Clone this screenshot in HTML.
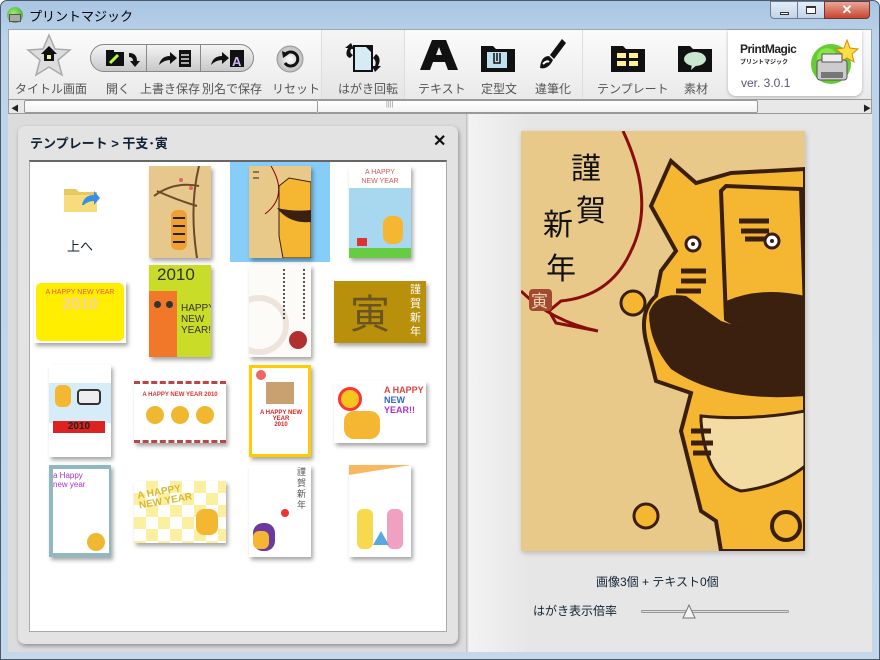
<!DOCTYPE html>
<html><head><meta charset="utf-8"><style>
*{margin:0;padding:0;box-sizing:border-box}
body{width:880px;height:660px;overflow:hidden;background:#fff;font-family:"Liberation Sans","Noto Sans CJK JP",sans-serif;position:relative}
.a{position:absolute}
.t{font-size:12px;color:#555;white-space:nowrap}
.th{position:absolute;box-shadow:2px 3px 4px rgba(0,0,0,.35);overflow:hidden}
</style></head><body>
<div class="a" style="left:0;top:0;width:880px;height:660px;background:linear-gradient(#a9c5e2,#bcd3ea 40px,#c4d8ec);border:1px solid #4a5a6c;border-radius:7px 7px 0 0"></div>
<div class="a" style="left:7px;top:7px;width:16px;height:16px;border-radius:50%;background:radial-gradient(circle at 40% 40%,#9e6,#393);"></div>
<div class="a" style="left:9px;top:14px;width:12px;height:8px;background:#aaa;border:1px solid #555"></div>
<div class="a" style="left:29px;top:6px;font-size:13px;color:#000">プリントマジック</div>
<div class="a" style="left:770px;top:1px;width:28px;height:18px;border:1px solid #6a7d93;border-radius:0 0 0 4px;background:linear-gradient(#e4edf7,#c2d3e6)"><div class="a" style="left:9px;top:10px;width:9px;height:3px;background:#fff;border:1px solid #333"></div></div>
<div class="a" style="left:797px;top:1px;width:28px;height:18px;border:1px solid #6a7d93;background:linear-gradient(#e4edf7,#c2d3e6)"><div class="a" style="left:8px;top:4px;width:10px;height:8px;border:1px solid #333;border-top-width:2px;background:#fff"></div></div>
<div class="a" style="left:824px;top:1px;width:46px;height:18px;border:1px solid #6a3a30;border-radius:0 0 4px 0;background:linear-gradient(#e9a597,#c8452f);color:#fff;font-weight:bold;font-size:13px;text-align:center;line-height:16px">✕</div>
<div class="a" style="left:8px;top:29px;width:864px;height:70px;background:linear-gradient(#fbfbfb,#f1f1f1 60%,#e9e9e9);border:1px solid #9aa;border-bottom:none"></div>
<div class="a" style="left:322px;top:30px;width:83px;height:69px;background:linear-gradient(#f5f5f5,#e5e5e5)"></div>
<div class="a" style="left:321px;top:30px;width:1px;height:69px;background:#ddd"></div>
<div class="a" style="left:404px;top:30px;width:1px;height:69px;background:#ddd"></div>
<div class="a" style="left:582px;top:30px;width:1px;height:69px;background:#ddd"></div>
<svg class="a" style="left:26px;top:33px" width="46" height="46" viewBox="0 0 46 46"><polygon points="23,2 29,16 44,17 32,27 36,42 23,34 10,42 14,27 2,17 17,16" fill="#ddd" stroke="#aaa" stroke-width="1.5"/><polygon points="23,13 31,21 28,21 28,28 18,28 18,21 15,21" fill="#111"/><rect x="21" y="22" width="4" height="4" fill="#ee9"/></svg>
<div class="a" style="left:90px;top:44px;width:164px;height:28px;border-radius:14px;border:1px solid #888;background:linear-gradient(#f4f4f4,#c8c8c8)"></div>
<div class="a" style="left:146px;top:45px;width:1px;height:26px;background:#888"></div>
<div class="a" style="left:200px;top:45px;width:1px;height:26px;background:#888"></div>
<svg class="a" style="left:104px;top:47px" width="40" height="22"><rect x="2" y="5" width="18" height="14" fill="#111"/><rect x="2" y="3" width="8" height="4" fill="#111"/><path d="M6 16 L14 8" stroke="#bf3" stroke-width="3"/><path d="M25 6 q8 0 8 8 l3 0 l-5 6 l-5 -6 l3 0 q0 -4 -4 -4z" fill="#111"/></svg>
<svg class="a" style="left:156px;top:47px" width="40" height="22"><path d="M3 18 q2-9 11-9 l0-4 l7 6 l-7 6 l0-4 q-6 0-11 5z" fill="#111"/><rect x="23" y="3" width="12" height="17" fill="#111"/><path d="M25 8h8M25 12h8M25 16h8" stroke="#ddd" stroke-width="1.5"/></svg>
<svg class="a" style="left:208px;top:47px" width="40" height="22"><path d="M3 18 q2-9 11-9 l0-4 l7 6 l-7 6 l0-4 q-6 0-11 5z" fill="#111"/><rect x="22" y="3" width="14" height="17" fill="#111"/><text x="24" y="19" font-size="13" font-weight="bold" fill="#c9b6f3" font-family="Liberation Sans">A</text></svg>
<svg class="a" style="left:275px;top:44px" width="30" height="30"><defs><radialGradient id="g1"><stop offset="0" stop-color="#fff"/><stop offset="1" stop-color="#bbb"/></radialGradient></defs><circle cx="15" cy="15" r="13" fill="url(#g1)" stroke="#999"/><path d="M10 11 a7 7 0 1 1 0 8" fill="none" stroke="#111" stroke-width="3"/><polygon points="7,7 14,10 8,14" fill="#111"/></svg>
<svg class="a" style="left:338px;top:40px" width="50" height="36"><rect x="15" y="5" width="20" height="27" fill="#111"/><path d="M17 7h11l5 5v18h-16z" fill="#d6ecf5"/><path d="M12 18 q-6-2-2-10 l-3 0 l6-5 l3 6 l-3 0 q-2 4 2 6z" fill="#111"/><path d="M38 14 q6 4 2 12 l3 0 l-6 6 l-3-6 l3 0 q2-5-2-8z" fill="#111"/></svg>
<svg class="a" style="left:419px;top:38px" width="40" height="34"><polygon points="13,2 27,2 39,32 29,32 26,24 14,24 11,32 1,32" fill="#111"/><polygon points="17,17 23,17 20,9" fill="#eee"/></svg>
<svg class="a" style="left:479px;top:40px" width="38" height="34"><path d="M2 6h12l3 3h19v23h-34z" fill="#111"/><rect x="8" y="12" width="20" height="16" fill="#bfe0ee"/><path d="M15 13v10h6v-10M18 13v8" stroke="#111" stroke-width="1.5" fill="none"/></svg>
<svg class="a" style="left:536px;top:37px" width="32" height="36"><path d="M26 2 l4 4 l-12 16 l-4-4z" fill="#111"/><path d="M13 19 q-8 0-9 12 q8 2 13-8z" fill="#111"/><path d="M7 27 q4 -4 6 -2" stroke="#fff" stroke-width="2" fill="none"/></svg>
<svg class="a" style="left:609px;top:40px" width="38" height="34"><path d="M2 6h12l3 3h19v23h-34z" fill="#111"/><rect x="8" y="13" width="9" height="5" fill="#ffef9a"/><rect x="20" y="13" width="9" height="5" fill="#ffef9a"/><rect x="8" y="21" width="9" height="5" fill="#ffef9a"/><rect x="20" y="21" width="9" height="5" fill="#ffef9a"/></svg>
<svg class="a" style="left:676px;top:40px" width="38" height="34"><path d="M2 6h12l3 3h19v23h-34z" fill="#111"/><ellipse cx="19" cy="19" rx="11" ry="7" fill="#c8e6d0"/><polygon points="16,24 22,24 15,30" fill="#c8e6d0"/></svg>
<div class="a t" style="left:15px;top:80px">タイトル画面</div>
<div class="a t" style="left:106px;top:80px">開く</div>
<div class="a t" style="left:140px;top:80px">上書き保存</div>
<div class="a t" style="left:202px;top:80px">別名で保存</div>
<div class="a t" style="left:272px;top:80px">リセット</div>
<div class="a t" style="left:338px;top:80px">はがき回転</div>
<div class="a t" style="left:418px;top:80px">テキスト</div>
<div class="a t" style="left:481px;top:80px">定型文</div>
<div class="a t" style="left:535px;top:80px">違筆化</div>
<div class="a t" style="left:597px;top:80px">テンプレート</div>
<div class="a t" style="left:684px;top:80px">素材</div>
<div class="a" style="left:728px;top:30px;width:134px;height:66px;background:#fff;border-radius:0 0 8px 8px;box-shadow:0 1px 3px rgba(0,0,0,.25)"></div>
<div class="a" style="left:740px;top:42px;font-size:12px;font-weight:bold;color:#222;letter-spacing:-.5px">PrintMagic</div>
<div class="a" style="left:740px;top:57px;font-size:6px;color:#222;font-weight:bold">プリントマジック</div>
<div class="a" style="left:741px;top:76px;font-size:12px;color:#557">ver. 3.0.1</div>
<svg class="a" style="left:805px;top:38px" width="56" height="52"><circle cx="26" cy="26" r="20" fill="#6c3"/><circle cx="22" cy="20" r="10" fill="#9e5" opacity=".7"/><polygon points="42,2 45,10 53,11 47,16 49,24 42,20 35,24 37,16 31,11 39,10" fill="#fd4" stroke="#d80"/><rect x="12" y="22" width="30" height="20" rx="3" fill="#ccc" stroke="#555"/><rect x="17" y="16" width="20" height="8" fill="#eee" stroke="#555"/><rect x="16" y="34" width="22" height="6" fill="#777"/></svg>
<div class="a" style="left:8px;top:99px;width:864px;height:15px;background:#e8e8e8;border:1px solid #999"></div>
<div class="a" style="left:11px;top:103px;font-size:8px;color:#222">◀</div>
<div class="a" style="left:863px;top:103px;font-size:8px;color:#222">▶</div>
<div class="a" style="left:24px;top:100px;width:294px;height:13px;background:linear-gradient(#fff,#f2f2f2);border:1px solid #999;border-radius:2px"></div>
<div class="a" style="left:318px;top:100px;width:440px;height:13px;background:linear-gradient(#fff,#f2f2f2);border:1px solid #999;border-left:none;border-radius:0 2px 2px 0"></div>
<div class="a" style="left:386px;top:101px;font-size:7px;color:#888">||||</div>
<div class="a" style="left:8px;top:114px;width:864px;height:538px;background:#e8e8e8;border:1px solid #888;border-top:none"></div>
<div class="a" style="left:8px;top:114px;width:459px;height:538px;background:#dcdcdc"></div>
<div class="a" style="left:466px;top:114px;width:3px;height:538px;background:linear-gradient(90deg,#bbb,#f4f4f4)"></div>
<div class="a" style="left:469px;top:114px;width:403px;height:538px;background:linear-gradient(90deg,#f3f3f3,#e6e6e6 60px,#e6e6e6)"></div>
<div class="a" style="left:18px;top:126px;width:440px;height:518px;background:#e3e3e3;border-radius:7px;box-shadow:1px 2px 4px rgba(0,0,0,.35)"></div>
<div class="a" style="left:30px;top:133px;font-size:13px;color:#123;font-weight:bold">テンプレート &gt; 干支･寅</div>
<div class="a" style="left:433px;top:131px;font-size:16px;font-weight:bold;color:#111">✕</div>
<div class="a" style="left:29px;top:160px;width:418px;height:472px;background:#fff;border:1px solid #aaa;border-top:2px solid #666"></div>
<svg class="a" style="left:62px;top:183px" width="40" height="34"><path d="M2 6h12l3 3h18v20h-33z" fill="#e8c860"/><rect x="2" y="12" width="33" height="17" fill="#f7dc7c"/><path d="M20 22 q2-10 12-10 l0-4 l6 7 l-6 7 l0-4 q-6 0-10 4z" fill="#3a8ee6"/></svg>
<div class="a" style="left:67px;top:236px;font-size:13px;color:#123">上へ</div>
<div class="th" style="left:149px;top:166px;width:62px;height:92px;background:#e6c88c"><svg width="62" height="92"><path d="M50 0 q-10 40 -2 92 M50 20 q-25 -5 -45 10 M48 40 q-20 -6 -40 -15" stroke="#6b4a2a" stroke-width="2" fill="none"/><circle cx="32" cy="14" r="2" fill="#d66"/><circle cx="42" cy="22" r="2" fill="#d66"/><rect x="22" y="44" width="16" height="40" rx="6" fill="#f0a030"/><path d="M24 52h12M24 60h12M24 68h12M24 76h12" stroke="#222" stroke-width="2"/></svg></div>
<div class="a" style="left:230px;top:162px;width:100px;height:100px;background:#86cdfa"></div>
<div class="th" style="left:249px;top:166px;width:62px;height:92px;background:#e8c98a"><svg width="62" height="92"><path d="M22 0 q18 30 -6 48" stroke="#800" fill="none"/><path d="M30 20 L40 12 L62 16 L62 92 L34 92 L30 70 Z" fill="#f5b731" stroke="#3a1f10"/><path d="M28 42 Q40 58 62 56 L62 44 Q45 46 28 42z" fill="#3b2010"/><path d="M4 6h6M4 12h6" stroke="#222"/></svg></div>
<div class="th" style="left:349px;top:166px;width:62px;height:92px;background:#a8d8f0"><div class="a" style="left:0;top:0;width:62px;height:22px;background:#fff;font-size:7px;color:#d55;text-align:center;line-height:9px;padding-top:2px">A HAPPY<br>NEW YEAR</div><div class="a" style="left:0;top:82px;width:62px;height:10px;background:#6c4"></div><div class="a" style="left:34px;top:50px;width:20px;height:28px;border-radius:8px;background:#f5b731"></div><div class="a" style="left:8px;top:72px;width:10px;height:8px;background:#d33"></div></div>
<div class="th" style="left:34px;top:281px;width:92px;height:62px;background:#fff"><div class="a" style="left:2px;top:2px;width:88px;height:58px;background:#ffee00;border-radius:5px;font-size:7px;color:#e55;text-align:center;padding-top:6px">A HAPPY NEW YEAR<div style="font-size:16px;color:#f6d0b0;font-weight:bold">2010</div></div></div>
<div class="th" style="left:149px;top:265px;width:62px;height:92px;background:#c8dc28"><div class="a" style="left:8px;top:0;font-size:17px;color:#333">2010</div><div class="a" style="left:0;top:26px;width:28px;height:66px;background:#f07828"></div><div class="a" style="left:5px;top:36px;width:7px;height:7px;border-radius:50%;background:#333"></div><div class="a" style="left:17px;top:36px;width:7px;height:7px;border-radius:50%;background:#333"></div><div class="a" style="left:32px;top:38px;font-size:10px;line-height:11px;color:#333">HAPPY<br>NEW<br>YEAR!</div></div>
<div class="th" style="left:249px;top:265px;width:62px;height:92px;background:#fdfbf8"><div class="a" style="left:-20px;top:30px;width:60px;height:60px;border-radius:50%;border:6px solid #eee4dc"></div><div class="a" style="left:40px;top:66px;width:18px;height:18px;border-radius:50%;background:#b03030"></div><div class="a" style="left:34px;top:4px;width:22px;height:50px;border-left:2px dotted #555;border-right:2px dotted #555"></div></div>
<div class="th" style="left:334px;top:281px;width:92px;height:62px;background:#b8900c"><div class="a" style="left:16px;top:6px;font-size:40px;color:#6a5520;line-height:48px;font-family:'Noto Sans CJK JP'">寅</div><div class="a" style="left:76px;top:2px;width:12px;font-size:11px;line-height:14px;color:#fff">謹賀新年</div></div>
<div class="th" style="left:49px;top:365px;width:62px;height:92px;background:#fff"><div class="a" style="left:0;top:18px;width:62px;height:40px;background:#d6ecf8"></div><div class="a" style="left:6px;top:20px;width:16px;height:22px;background:#f5b731;border-radius:6px"></div><div class="a" style="left:28px;top:24px;width:24px;height:16px;background:#eee;border:2px solid #333;border-radius:4px"></div><div class="a" style="left:4px;top:56px;width:52px;height:12px;background:#d22;font-size:10px;font-weight:bold;color:#222;text-align:center;line-height:12px">2010</div></div>
<div class="th" style="left:134px;top:381px;width:92px;height:62px;background:#fff;border-top:3px dashed #b44;border-bottom:3px dashed #b44"><div class="a" style="left:0;top:8px;width:92px;text-align:center;font-size:6px;color:#d33;font-weight:bold">A HAPPY NEW YEAR 2010</div><div class="a" style="left:12px;top:22px;width:18px;height:18px;border-radius:50%;background:#f0b830"></div><div class="a" style="left:37px;top:22px;width:18px;height:18px;border-radius:50%;background:#f0b830"></div><div class="a" style="left:62px;top:22px;width:18px;height:18px;border-radius:50%;background:#f0b830"></div></div>
<div class="th" style="left:249px;top:365px;width:62px;height:92px;background:#fff;border:3px solid #ffcc00"><div class="a" style="left:14px;top:14px;width:28px;height:22px;background:#c9a070"></div><div class="a" style="left:2px;top:42px;width:54px;text-align:center;font-size:6px;color:#d22;font-weight:bold">A HAPPY NEW YEAR<br>2010</div><div class="a" style="left:4px;top:2px;width:10px;height:10px;border-radius:50%;background:#e66"></div></div>
<div class="th" style="left:334px;top:381px;width:92px;height:62px;background:#fff"><div class="a" style="left:4px;top:6px;width:24px;height:24px;border-radius:50%;background:#f7c520;border:3px solid #f33"></div><div class="a" style="left:50px;top:4px;font-size:9px;font-weight:bold;color:#d44;line-height:10px">A HAPPY<br><span style="color:#36c">NEW</span><br><span style="color:#a3c">YEAR!!</span></div><div class="a" style="left:10px;top:30px;width:36px;height:28px;border-radius:10px;background:#f5b731"></div></div>
<div class="th" style="left:49px;top:465px;width:62px;height:92px;background:#fff;border:4px solid #8fb8c0;border-right-width:2px"><div class="a" style="left:0;top:2px;font-size:8px;color:#a3c;line-height:9px">a Happy<br>new year</div><div class="a" style="left:34px;top:64px;width:18px;height:18px;border-radius:50%;background:#f0b830"></div></div>
<div class="th" style="left:134px;top:481px;width:92px;height:62px;background:repeating-conic-gradient(#fcf0a0 0 25%,#fff 0 50%) 0 0/24px 24px"><div class="a" style="left:4px;top:6px;font-size:10px;font-weight:bold;color:#d8b830;line-height:10px;transform:rotate(-10deg)">A HAPPY<br>NEW YEAR</div><div class="a" style="left:62px;top:28px;width:22px;height:26px;border-radius:8px;background:#f5b731"></div></div>
<div class="th" style="left:249px;top:465px;width:62px;height:92px;background:#fff"><div class="a" style="left:48px;top:2px;width:10px;font-size:9px;line-height:11px;color:#555">謹賀新年</div><div class="a" style="left:4px;top:58px;width:22px;height:28px;border-radius:10px;background:#6a3aa0"></div><div class="a" style="left:4px;top:66px;width:16px;height:18px;border-radius:6px;background:#f5b731"></div><div class="a" style="left:32px;top:44px;width:8px;height:8px;border-radius:50%;background:#e33"></div></div>
<div class="th" style="left:349px;top:465px;width:62px;height:92px;background:#fff"><div class="a" style="left:0;top:0;width:62px;height:10px;background:#f7b860;clip-path:polygon(0 0,100% 0,0 100%)"></div><div class="a" style="left:8px;top:44px;width:16px;height:40px;border-radius:6px;background:#f8d84c"></div><div class="a" style="left:38px;top:44px;width:16px;height:40px;border-radius:6px;background:#f0a0c0"></div><div class="a" style="left:24px;top:66px;width:0;height:0;border-left:8px solid transparent;border-right:8px solid transparent;border-bottom:14px solid #5aa8e0"></div></div>
<div class="a" style="left:521px;top:131px;width:284px;height:420px;background:#e8c98a;overflow:hidden;box-shadow:1px 2px 5px rgba(0,0,0,.2)">
<svg width="284" height="420" viewBox="0 0 284 420">
<path d="M102 0 Q135 70 110 120 Q90 165 40 170 L28 180 L35 192 L77 200 Q30 190 0 160" fill="none" stroke="#8a0d0d" stroke-width="3"/>
<path d="M130 75 L150 30 L175 52 L210 42 L284 38 L284 420 L200 420 L195 390 L180 380 L160 300 L170 262 L135 250 L125 210 Q118 180 135 165 L140 140 L155 120 Z" fill="#f5b731" stroke="#3a1f10" stroke-width="4"/>
<path d="M128 182 Q135 160 165 165 L200 190 Q240 205 284 188 L284 265 Q200 272 150 238 Q128 212 128 182z" fill="#3b2010"/>
<path d="M200 60 L205 55 L280 58 L284 180 Q240 210 205 188 Z" fill="#f5b731" stroke="#3a1f10" stroke-width="4"/>
<path d="M205 170 Q240 155 284 165 L284 190 Q240 210 205 188z" fill="#3b2010"/>
<path d="M180 290 Q185 350 220 360 Q260 355 284 335 L284 280 Q230 290 180 285z" fill="#f3dba4" stroke="#3a1f10" stroke-width="3"/>
<circle cx="112" cy="172" r="12" fill="#f5b731" stroke="#3a1f10" stroke-width="3"/>
<circle cx="172" cy="113" r="7" fill="#fff" stroke="#3a1f10" stroke-width="3"/><circle cx="172" cy="113" r="2" fill="#3a1f10"/>
<circle cx="251" cy="110" r="7" fill="#fff" stroke="#3a1f10" stroke-width="3"/><circle cx="251" cy="110" r="2" fill="#3a1f10"/>
<path d="M218 90h30M220 100h28M224 108h20M160 140h25M160 150h25M155 160h25M170 300h20M170 312h22M172 322h18" stroke="#3a1f10" stroke-width="5"/>
<circle cx="125" cy="385" r="12" fill="#f5b731" stroke="#3a1f10" stroke-width="3"/>
<circle cx="265" cy="395" r="14" fill="none" stroke="#3a1f10" stroke-width="4"/>
<text x="50" y="48" font-size="30" fill="#111" font-family="Noto Sans CJK JP">謹</text>
<text x="55" y="90" font-size="30" fill="#111" font-family="Noto Sans CJK JP">賀</text>
<text x="22" y="104" font-size="30" fill="#111" font-family="Noto Sans CJK JP">新</text>
<text x="25" y="148" font-size="30" fill="#111" font-family="Noto Sans CJK JP">年</text>
<rect x="8" y="158" width="23" height="22" rx="4" fill="#a04a30"/>
<text x="10" y="176" font-size="17" fill="#f0d0b0" font-family="Noto Sans CJK JP">寅</text>
</svg></div>
<div class="a" style="left:596px;top:573px;font-size:12px;color:#123">画像3個 + テキスト0個</div>
<div class="a" style="left:533px;top:602px;font-size:12px;color:#123">はがき表示倍率</div>
<div class="a" style="left:641px;top:610px;width:148px;height:3px;border:1px solid #999;background:#ddd;border-radius:2px"></div>
<svg class="a" style="left:682px;top:604px" width="14" height="16"><polygon points="7,1 13,14 1,14" fill="#f4f4f4" stroke="#777"/></svg>
</body></html>
